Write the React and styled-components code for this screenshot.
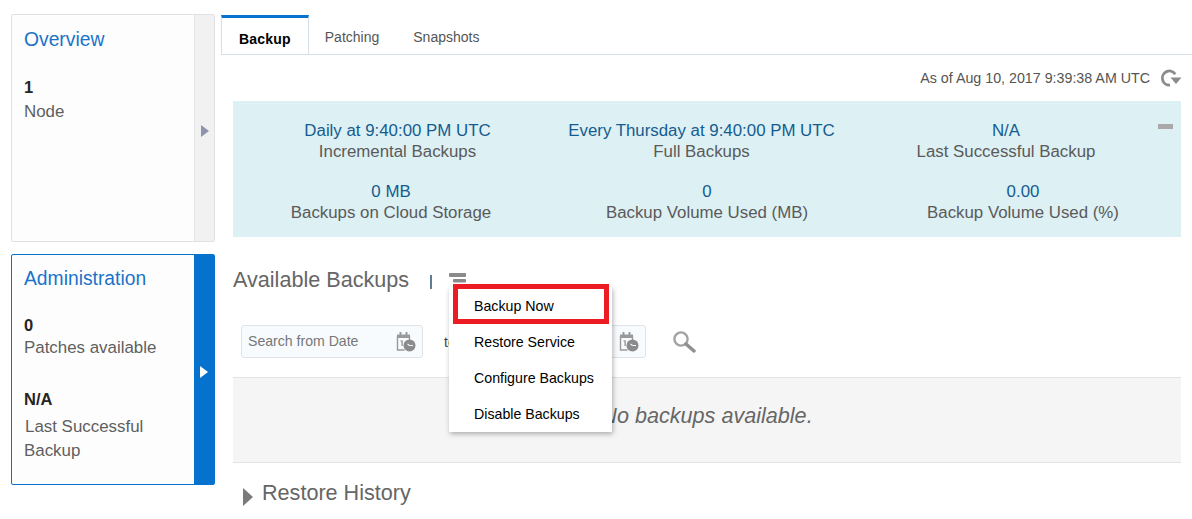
import React from "react";
import styled, { createGlobalStyle } from "styled-components";

const Global = createGlobalStyle`
  html, body { margin: 0; padding: 0; background: #fff; }
  body { font-family: "Liberation Sans", Arial, sans-serif; width: 1192px; height: 519px; overflow: hidden; }
`;

const Page = styled.div`
  display: grid;
  grid-template-columns: 204px 1fr;
  column-gap: 6px;
  padding: 14px 11px 0 11px;
  height: 519px;
  box-sizing: border-box;
  overflow: hidden;
`;

const Side = styled.aside`
  display: flex;
  flex-direction: column;
  gap: 12px;
`;

const Card = styled.section`
  display: flex;
  height: ${(p) => p.$h}px;
  box-sizing: border-box;
  background: #fdfdfd;
  border: 1px solid ${(p) => (p.$active ? "#0572ce" : "#dfe1e4")};
  border-radius: 2px;
`;

const CardBody = styled.div`
  flex: 1;
  padding: ${(p) => p.$top}px 12px 0;
  min-width: 0;
`;

const CardTitle = styled.h2`
  margin: 0 0 ${(p) => p.$after}px;
  font-size: 19.3px;
  line-height: 24px;
  font-weight: 400;
  color: #1a73c9;
`;

const StatValue = styled.div`
  font-size: 16.5px;
  line-height: 24px;
  font-weight: 700;
  color: #252525;
  margin-bottom: ${(p) => p.$after || 0}px;
`;

const StatLabel = styled.div`
  font-size: 16.9px;
  line-height: 24px;
  color: #5f5f5f;
  margin-bottom: ${(p) => p.$gap || 0}px;
  padding-left: ${(p) => p.$inset || 0}px;
`;

const Handle = styled.div`
  width: 20px;
  flex: none;
  display: flex;
  align-items: center;
  justify-content: center;
  padding-top: 5px;
  background: ${(p) => (p.$active ? "#0572ce" : "#f1f1f1")};
  border-left: ${(p) => (p.$active ? "0" : "1px solid #e2e3e5")};
  box-sizing: border-box;
  color: ${(p) => (p.$active ? "#fff" : "#8d94ac")};
`;

const Main = styled.main`
  position: relative;
  min-width: 0;
`;

const Tabs = styled.nav`
  display: flex;
  height: 41px;
  box-sizing: border-box;
  border-bottom: 1px solid #d6dfe6;
  width: 971px;
  padding-top: 1px;
`;

const Tab = styled.div`
  box-sizing: border-box;
  height: 39px;
  padding: ${(p) => (p.$active ? "11px 17px 0 17px" : "12px 18px 0 16px")};
  font-size: 14px;
  line-height: 20px;
  font-weight: ${(p) => (p.$active ? 700 : 400)};
  letter-spacing: ${(p) => (p.$active ? "0.2px" : "0")};
  color: ${(p) => (p.$active ? "#000" : "#555")};
  border-top: ${(p) => (p.$active ? "3px solid #0572ce" : "0")};
  border-left: ${(p) => (p.$active ? "1px solid #d6dfe6" : "0")};
  border-right: ${(p) => (p.$active ? "1px solid #d6dfe6" : "0")};
  background: #fff;
`;

const StatusRow = styled.div`
  display: flex;
  justify-content: flex-end;
  align-items: center;
  gap: 10px;
  height: 46px;
  padding-right: 10px;
  width: 961px;
  font-size: 14.25px;
  color: #555;
`;

const Summary = styled.div`
  position: relative;
  margin-left: 12px;
  width: 948px;
  height: 136px;
  box-sizing: border-box;
  background: #ddf0f4;
  padding: 19px 0 0 0;
`;

const SummaryRow = styled.div`
  display: grid;
  grid-template-columns: ${(p) => p.$cols};
  height: 61px;
`;

const SummaryCell = styled.div`
  text-align: center;
  font-size: 16.85px;
  line-height: 21px;
  color: #5a5a5a;
`;

const SummaryValue = styled.div`
  color: #145c8f;
`;

const Collapse = styled.span`
  position: absolute;
  top: 23px;
  right: 8px;
  width: 15px;
  height: 5px;
  background: #a9a9a9;
`;

const SectionHead = styled.div`
  display: flex;
  align-items: center;
  margin: 29px 0 0 12px;
  height: 28px;
`;

const SectionTitle = styled.h3`
  margin: 0;
  font-size: 21.6px;
  line-height: 28px;
  font-weight: 400;
  color: #666;
`;

const Divider = styled.span`
  width: 2px;
  height: 14px;
  margin: 4px 17px 0 21px;
  background: #5f7d96;
`;

const Filters = styled.div`
  display: flex;
  align-items: center;
  margin: 31px 0 0 20px;
  height: 33px;
`;

const DateField = styled.div`
  display: flex;
  align-items: center;
  justify-content: ${(p) => (p.$iconOnly ? "flex-end" : "space-between")};
  box-sizing: border-box;
  width: ${(p) => p.$w}px;
  height: 33px;
  padding: 0 6px 0 6px;
  background: #f8fbfe;
  border: 1px solid #dfe4ea;
  border-radius: 3px;
  font-size: 14.1px;
  color: #777;
`;

const Placeholder = styled.span`
  margin-top: -1px;
`;

const ToLabel = styled.span`
  font-size: 14px;
  color: #444;
  width: 22px;
  margin-left: 21px;
`;

const SearchBtn = styled.span`
  margin-left: 26px;
  display: flex;
  color: #9a9a9a;
`;

const Empty = styled.div`
  margin: 19px 0 0 12px;
  width: 948px;
  height: 86px;
  box-sizing: border-box;
  padding-bottom: 8px;
  display: flex;
  align-items: center;
  justify-content: center;
  background: #f5f5f5;
  border-top: 1px solid #e3e3e3;
  border-bottom: 1px solid #e3e3e3;
  font-size: 21.6px;
  font-style: italic;
  color: #666;
`;

const Disclosure = styled.div`
  display: flex;
  align-items: center;
  gap: 9px;
  margin: 16px 0 0 22px;
  height: 28px;
  font-size: 21.6px;
  color: #666;
`;

const DisclosureCaret = styled.svg`
  margin-top: 8px;
  flex: none;
`;

const Menu = styled.ul`
  position: absolute;
  left: 228px;
  top: 273px;
  width: 163px;
  margin: 0;
  padding: 1px 0 0;
  height: 145px;
  box-sizing: border-box;
  list-style: none;
  background: #fff;
  box-shadow: 1px 2px 5px rgba(0, 0, 0, 0.3);
`;

const MenuItem = styled.li`
  height: 36px;
  padding-left: 25px;
  display: flex;
  align-items: center;
  font-size: 14.2px;
  color: #000;
`;

const Callout = styled.div`
  position: absolute;
  left: 232px;
  top: 270px;
  width: 156px;
  height: 40px;
  box-sizing: border-box;
  border: 5px solid #ed1c24;
`;

const Caret = () => (
  <svg width="8" height="12" viewBox="0 0 8 12" aria-hidden="true">
    <path d="M0 0 L8 6 L0 12 Z" fill="currentColor" />
  </svg>
);

const CalendarIcon = () => (
  <svg width="20" height="22" viewBox="0 0 20 22" aria-hidden="true">
    <path d="M1.5 5v14h7M13.5 5v4" fill="none" stroke="#999" strokeWidth="1.4" />
    <rect x="1" y="3.5" width="13" height="3.5" fill="#999" />
    <rect x="3.5" y="1" width="2" height="4" fill="#999" />
    <rect x="9.5" y="1" width="2" height="4" fill="#999" />
    <path d="M4.5 10h1.6v5" fill="none" stroke="#888" strokeWidth="1.2" />
    <circle cx="13.5" cy="14.5" r="6" fill="#8b8b8b" />
    <path d="M13.5 14.5h3.5M13.5 14.5l-2-1.5" stroke="#f3f3f3" strokeWidth="1.2" fill="none" />
  </svg>
);

const RefreshIcon = () => (
  <svg width="22" height="18" viewBox="0 0 22 18" aria-hidden="true">
    <path d="M15.2 5.2A7 7 0 1 0 10 16" fill="none" stroke="#8b8b8b" strokeWidth="2.8" />
    <path d="M10.5 8.5h11l-5.5 6.5z" fill="#8b8b8b" />
  </svg>
);

const StackIcon = () => (
  <svg width="17" height="15" viewBox="0 0 17 15" aria-hidden="true">
    <rect x="0" y="0" width="17" height="4" rx="1" fill="#8a8a8a" />
    <rect x="4" y="6" width="13" height="3.5" rx="1" fill="#8a8a8a" />
    <rect x="4" y="11" width="13" height="3.5" rx="1" fill="#8a8a8a" />
  </svg>
);

const SearchIcon = () => (
  <svg width="24" height="24" viewBox="0 0 24 24" aria-hidden="true">
    <circle cx="9" cy="9" r="6.6" fill="none" stroke="#a3a3a3" strokeWidth="2.4" />
    <path d="M14 14l8 7" stroke="#8f8f8f" strokeWidth="3.4" strokeLinecap="round" />
  </svg>
);

const summaryRows = [
  {
    cols: "329px 279px 330px",
    cells: [
      ["Daily at 9:40:00 PM UTC", "Incremental Backups"],
      ["Every Thursday at 9:40:00 PM UTC", "Full Backups"],
      ["N/A", "Last Successful Backup"],
    ],
  },
  {
    cols: "repeat(3, 1fr)",
    cells: [
      ["0 MB", "Backups on Cloud Storage"],
      ["0", "Backup Volume Used (MB)"],
      ["0.00", "Backup Volume Used (%)"],
    ],
  },
];

const menu = ["Backup Now", "Restore Service", "Configure Backups", "Disable Backups"];

export default function App() {
  return (
    <>
      <Global />
      <Page>
        <Side>
          <Card $h={228}>
            <CardBody $top={13}>
              <CardTitle $after={23}>Overview</CardTitle>
              <StatValue $after={1}>1</StatValue>
              <StatLabel>Node</StatLabel>
            </CardBody>
            <Handle><Caret /></Handle>
          </Card>
          <Card $h={231} $active>
            <CardBody $top={12}>
              <CardTitle $after={22}>Administration</CardTitle>
              <StatValue $after={-1}>0</StatValue>
              <StatLabel $gap={27}>Patches available</StatLabel>
              <StatValue $after={4}>N/A</StatValue>
              <StatLabel $inset={1}>Last Successful</StatLabel>
              <StatLabel>Backup</StatLabel>
            </CardBody>
            <Handle $active><Caret /></Handle>
          </Card>
        </Side>
        <Main>
          <Tabs>
            <Tab $active>Backup</Tab>
            <Tab>Patching</Tab>
            <Tab>Snapshots</Tab>
          </Tabs>
          <StatusRow>
            <span>As of Aug 10, 2017 9:39:38 AM UTC</span>
            <RefreshIcon />
          </StatusRow>
          <Summary>
            {summaryRows.map((row) => (
              <SummaryRow key={row.cols} $cols={row.cols}>
                {row.cells.map(([value, label]) => (
                  <SummaryCell key={label}>
                    <SummaryValue>{value}</SummaryValue>
                    {label}
                  </SummaryCell>
                ))}
              </SummaryRow>
            ))}
            <Collapse />
          </Summary>
          <SectionHead>
            <SectionTitle>Available Backups</SectionTitle>
            <Divider />
            <StackIcon />
          </SectionHead>
          <Filters>
            <DateField $w={182}><Placeholder>Search from Date</Placeholder><CalendarIcon /></DateField>
            <ToLabel>to</ToLabel>
            <DateField $w={180} $iconOnly><CalendarIcon /></DateField>
            <SearchBtn><SearchIcon /></SearchBtn>
          </Filters>
          <Empty>No backups available.</Empty>
          <Disclosure>
            <DisclosureCaret width="10" height="18" viewBox="0 0 10 18" aria-hidden="true">
              <path d="M0 0 L10 9 L0 18 Z" fill="#7a7a7a" />
            </DisclosureCaret>
            <span>Restore History</span>
          </Disclosure>
          <Menu>
            {menu.map((m) => <MenuItem key={m}>{m}</MenuItem>)}
          </Menu>
          <Callout />
        </Main>
      </Page>
    </>
  );
}
